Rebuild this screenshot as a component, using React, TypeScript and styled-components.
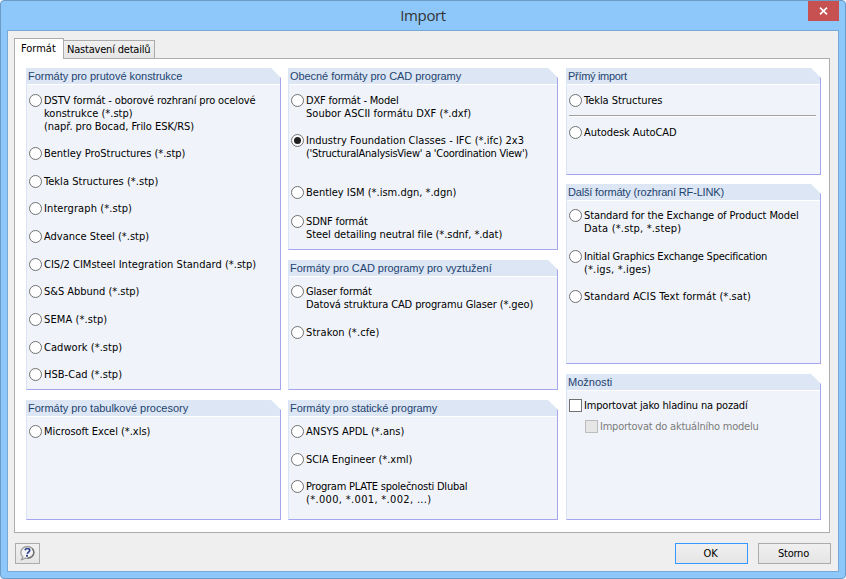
import React, { useState } from 'react';
import styled, { createGlobalStyle, css } from 'styled-components';

const uiFont = '"DejaVu Sans Condensed", "DejaVu Sans", sans-serif';

const GlobalStyle = createGlobalStyle`
  *, *::before, *::after { box-sizing: border-box; }
  body { margin: 0; background: #fff; font: 11px/13px ${uiFont}; color: #000; }
  button { font: inherit; color: inherit; padding: 0; margin: 0; }
`;

const Dialog = styled.div`
  display: flex;
  flex-direction: column;
  width: 846px;
  height: 579px;
  padding: 0 6px 6px;
  border: 1px solid #6b9bc8;
  border-radius: 4px;
  background: #8ec8fa;
  overflow: hidden;
`;

const TitleBar = styled.header`
  display: grid;
  grid-template-columns: 31px 1fr 31px;
  align-items: start;
  height: 29px;
`;

const Title = styled.h1`
  grid-column: 2;
  margin: 0;
  text-align: center;
  font: 400 15px/29px "Open Sans", "Noto Sans", sans-serif;
  letter-spacing: -0.35px;
  color: #333;
`;

const CloseButton = styled.button`
  display: flex;
  align-items: center;
  justify-content: center;
  width: 31px;
  height: 20px;
  border: 0;
  background: #c75050;
`;

const Client = styled.main`
  flex: 1;
  display: flex;
  flex-direction: column;
  padding: 7px 6px 6px;
  border: 1px solid #76a8d8;
  background: #efefef;
`;

const TabList = styled.div`
  display: flex;
  align-items: flex-end;
  height: 20px;
`;

const Tab = styled.button<{ $active?: boolean; $width: number; $spacing: number }>`
  width: ${p => p.$width}px;
  height: 18px;
  text-align: left;
  padding-left: 3px;
  border: 1px solid #acacac;
  border-left: 0;
  border-bottom: 0;
  background: linear-gradient(#efefef, #e6e6e6);
  line-height: 17px;
  letter-spacing: ${p => p.$spacing}px;
  white-space: nowrap;
  ${p => p.$active && css`
    position: relative;
    height: 21px;
    margin-bottom: -1px;
    padding: 0 0 2px 6px;
    border-left: 1px solid #acacac;
    background: #fff;
  `}
`;

const TabPanel = styled.section`
  display: grid;
  grid-template-columns: 255px 270px 255px;
  column-gap: 7px;
  width: 816px;
  height: 475px;
  padding: 9px 8px 12px 11px;
  border: 1px solid #acacac;
  background: #fff;
`;

const Column = styled.div<{ $offset?: number }>`
  display: flex;
  flex-direction: column;
  margin-left: ${p => p.$offset ?? 0}px;
  margin-right: ${p => -(p.$offset ?? 0)}px;
`;

const Group = styled.fieldset<{ $height: number; $gap?: number }>`
  min-width: 0;
  height: ${p => p.$height}px;
  margin: ${p => p.$gap ?? 0}px 0 0;
  padding: 0;
  border: 1px solid #a6a6ee;
  border-top: 0;
  border-left-color: #d9e5f6;
  background: #f0f4fa;
  clip-path: polygon(0 0, calc(100% - 10px) 0, 100% 10px, 100% 100%, 0 100%);
`;

const GroupTitle = styled.div<{ $spacing: number }>`
  height: 17px;
  padding-left: 1px;
  border-bottom: 1px solid #fff;
  background: #dce6f4;
  color: #1e4470;
  font: 11px/16px "Liberation Sans", Arial, sans-serif;
  letter-spacing: ${p => p.$spacing}px;
  white-space: nowrap;
`;

const GroupBody = styled.div<{ $top: number }>`
  padding: ${p => p.$top}px 4px 0 2px;
`;

const Option = styled.label<{ $gap?: number; $indent?: number; $disabled?: boolean }>`
  display: grid;
  grid-template-columns: 13px 1fr;
  column-gap: 2px;
  align-items: start;
  margin-top: ${p => p.$gap ?? 0}px;
  margin-left: ${p => p.$indent ?? 0}px;
  color: ${p => (p.$disabled ? '#7b7b7b' : '#000')};
`;

const Radio = styled.input`
  appearance: none;
  display: grid;
  place-items: center;
  width: 13px;
  height: 13px;
  margin: 0;
  border: 1px solid #707070;
  border-radius: 50%;
  background: #fff;
  &:checked::after {
    content: '';
    width: 7px;
    height: 7px;
    border-radius: 50%;
    background: #202020;
  }
`;

const Checkbox = styled.input`
  appearance: none;
  width: 13px;
  height: 13px;
  margin: 0;
  border: 1px solid #707070;
  background: #fff;
  &:checked { background: #707070; }
  &:disabled { border-color: #bcbcbc; background: #e6e6e6; }
`;

const Line = styled.span<{ $spacing: number }>`
  display: block;
  height: 13px;
  white-space: pre;
  letter-spacing: ${p => p.$spacing}px;
`;

const Separator = styled.hr`
  width: 247px;
  height: 2px;
  margin: 8px 0 0;
  border: 0;
  border-top: 1px solid #a0a0a0;
  border-bottom: 1px solid #fff;
`;

const Footer = styled.footer`
  display: flex;
  gap: 10px;
  margin: 10px 1px 0;
  margin-right: 0;
  padding-right: 1px;
`;

const FooterButton = styled.button<{ $primary?: boolean; $compact?: boolean }>`
  display: flex;
  align-items: center;
  justify-content: center;
  width: ${p => (p.$compact ? 25 : 73)}px;
  height: 21px;
  margin-right: ${p => (p.$compact ? 'auto' : 0)};
  padding-right: ${p => (p.$compact ? 0 : 2)}px;
  border: 1px solid ${p => (p.$primary ? '#3399ff' : '#acacac')};
  background: linear-gradient(#f0f0f0, #e5e5e5);
  letter-spacing: -0.25px;
`;

type TextLine = [text: string, spacing: number];
type OptionDef = { gap?: number; lines: TextLine[] };

const steel: OptionDef[] = [
  { lines: [['DSTV formát - oborové rozhraní pro ocelové', -0.14], ['konstrukce (*.stp)', 0.0], ['(např. pro Bocad, Frilo ESK/RS)', -0.03]] },
  { gap: 14, lines: [['Bentley ProStructures (*.stp)', -0.02]] },
  { gap: 15, lines: [['Tekla Structures (*.stp)', 0.04]] },
  { gap: 14, lines: [['Intergraph (*.stp)', 0.1]] },
  { gap: 15, lines: [['Advance Steel (*.stp)', 0]] },
  { gap: 15, lines: [['CIS/2 CIMsteel Integration Standard (*.stp)', 0.02]] },
  { gap: 14, lines: [['S&S Abbund (*.stp)', -0.03]] },
  { gap: 15, lines: [['SEMA (*.stp)', 0.1]] },
  { gap: 15, lines: [['Cadwork (*.stp)', 0.05]] },
  { gap: 14, lines: [['HSB-Cad (*.stp)', 0.03]] },
];

const spreadsheets: OptionDef[] = [{ lines: [['Microsoft Excel (*.xls)', -0.03]] }];

const cad: OptionDef[] = [
  { lines: [['DXF formát - Model', -0.18], ['Soubor ASCII formátu DXF (*.dxf)', 0.03]] },
  { gap: 14, lines: [['Industry Foundation Classes - IFC (*.ifc) 2x3', 0.02], ["('StructuralAnalysisView' a 'Coordination View')", -0.25]] },
  { gap: 26, lines: [['Bentley ISM (*.ism.dgn, *.dgn)', 0]] },
  { gap: 16, lines: [['SDNF formát', -0.12], ['Steel detailing neutral file (*.sdnf, *.dat)', -0.06]] },
];

const reinforcement: OptionDef[] = [
  { lines: [['Glaser formát', -0.17], ['Datová struktura CAD programu Glaser (*.geo)', -0.12]] },
  { gap: 15, lines: [['Strakon (*.cfe)', 0.1]] },
];

const structural: OptionDef[] = [
  { lines: [['ANSYS APDL (*.ans)', 0]] },
  { gap: 15, lines: [['SCIA Engineer (*.xml)', -0.05]] },
  { gap: 14, lines: [['Program PLATE společnosti Dlubal', -0.23], ['(*.000, *.001, *.002, ...)', 0.33]] },
];

const tekla: OptionDef[] = [{ lines: [['Tekla Structures', -0.04]] }];
const autocad: OptionDef[] = [{ gap: 9, lines: [['Autodesk AutoCAD', -0.07]] }];

const rfLink: OptionDef[] = [
  { lines: [['Standard for the Exchange of Product Model', -0.1], ['Data (*.stp, *.step)', 0.18]] },
  { gap: 15, lines: [['Initial Graphics Exchange Specification', -0.24], ['(*.igs, *.iges)', 0.15]] },
  { gap: 14, lines: [['Standard ACIS Text formát (*.sat)', 0.09]] },
];

const HelpIcon = () => (
  <svg width="17" height="17" viewBox="0 0 17 17" aria-hidden="true">
    <path
      d="M8.500 1.500C4.700 1.500 1.800 4 1.800 7.400c0 1.800.8 3.300 2.100 4.300L2.300 14.800l4-1.700c.7.200 1.500.3 2.200.3 3.700 0 6.500-2.600 6.500-6S12.200 1.500 8.500 1.500z"
      fill="#f3f3f6" stroke="#a0a0a0" strokeWidth="1.300" strokeLinejoin="round"
    />
    <path d="M13.300 3.600c1.900 2.500 1.800 5.700-.6 7.900-1.300 1.100-2.700 1.600-4.300 1.600" fill="none" stroke="#6c6c6c" strokeWidth="1.300" />
    <path d="M6 5.300C6.300 4 7.300 3.500 8.500 3.500c1.500 0 2.400.7 2.200 2-.2 1.500-2.100 1.600-2.500 3.400" fill="none" stroke="#31458f" strokeWidth="1.700" />
    <rect x="7" y="9.900" width="2" height="1.800" fill="#31458f" />
  </svg>
);

const CloseIcon = () => (
  <svg width="9" height="8" viewBox="0 0 9 8" aria-hidden="true">
    <path d="M1 .7l7 6.600M8 .7L1 7.300" stroke="#fff" strokeWidth="1.700" />
  </svg>
);

export default function App() {
  const [selected, setSelected] = useState('Industry Foundation Classes - IFC (*.ifc) 2x3');
  const [asLayer, setAsLayer] = useState(false);

  const renderOptions = (options: OptionDef[]) =>
    options.map(({ gap, lines }) => (
      <Option key={lines[0][0]} $gap={gap}>
        <Radio type="radio" name="format" checked={selected === lines[0][0]} onChange={() => setSelected(lines[0][0])} />
        <span>
          {lines.map(([text, spacing]) => (
            <Line key={text} $spacing={spacing}>{text}</Line>
          ))}
        </span>
      </Option>
    ));

  return (
    <>
      <GlobalStyle />
      <Dialog>
        <TitleBar>
          <Title>Import</Title>
          <CloseButton aria-label="Zavřít"><CloseIcon /></CloseButton>
        </TitleBar>
        <Client>
          <TabList>
            <Tab $active $width={50} $spacing={0}>Formát</Tab>
            <Tab $width={91} $spacing={-0.2}>Nastavení detailů</Tab>
          </TabList>
          <TabPanel>
            <Column>
              <Group $height={322}>
                <GroupTitle $spacing={-0.03}>Formáty pro prutové konstrukce</GroupTitle>
                <GroupBody $top={9}>{renderOptions(steel)}</GroupBody>
              </Group>
              <Group $height={120} $gap={10}>
                <GroupTitle $spacing={-0.02}>Formáty pro tabulkové procesory</GroupTitle>
                <GroupBody $top={8}>{renderOptions(spreadsheets)}</GroupBody>
              </Group>
            </Column>
            <Column>
              <Group $height={182}>
                <GroupTitle $spacing={-0.06}>Obecné formáty pro CAD programy</GroupTitle>
                <GroupBody $top={9}>{renderOptions(cad)}</GroupBody>
              </Group>
              <Group $height={130} $gap={10}>
                <GroupTitle $spacing={-0.05}>Formáty pro CAD programy pro vyztužení</GroupTitle>
                <GroupBody $top={8}>{renderOptions(reinforcement)}</GroupBody>
              </Group>
              <Group $height={120} $gap={10}>
                <GroupTitle $spacing={-0.07}>Formáty pro statické programy</GroupTitle>
                <GroupBody $top={8}>{renderOptions(structural)}</GroupBody>
              </Group>
            </Column>
            <Column $offset={1}>
              <Group $height={107}>
                <GroupTitle $spacing={-0.3}>Přímý import</GroupTitle>
                <GroupBody $top={9}>
                  {renderOptions(tekla)}
                  <Separator />
                  {renderOptions(autocad)}
                </GroupBody>
              </Group>
              <Group $height={180} $gap={9}>
                <GroupTitle $spacing={-0.17}>Další formáty (rozhraní RF-LINK)</GroupTitle>
                <GroupBody $top={8}>{renderOptions(rfLink)}</GroupBody>
              </Group>
              <Group $height={146} $gap={10}>
                <GroupTitle $spacing={0.02}>Možnosti</GroupTitle>
                <GroupBody $top={8}>
                  <Option>
                    <Checkbox type="checkbox" checked={asLayer} onChange={e => setAsLayer(e.target.checked)} />
                    <Line $spacing={-0.17}>Importovat jako hladinu na pozadí</Line>
                  </Option>
                  <Option $gap={8} $indent={16} $disabled>
                    <Checkbox type="checkbox" disabled />
                    <Line $spacing={-0.23}>Importovat do aktuálního modelu</Line>
                  </Option>
                </GroupBody>
              </Group>
            </Column>
          </TabPanel>
          <Footer>
            <FooterButton $compact aria-label="Nápověda"><HelpIcon /></FooterButton>
            <FooterButton $primary>OK</FooterButton>
            <FooterButton>Storno</FooterButton>
          </Footer>
        </Client>
      </Dialog>
    </>
  );
}
